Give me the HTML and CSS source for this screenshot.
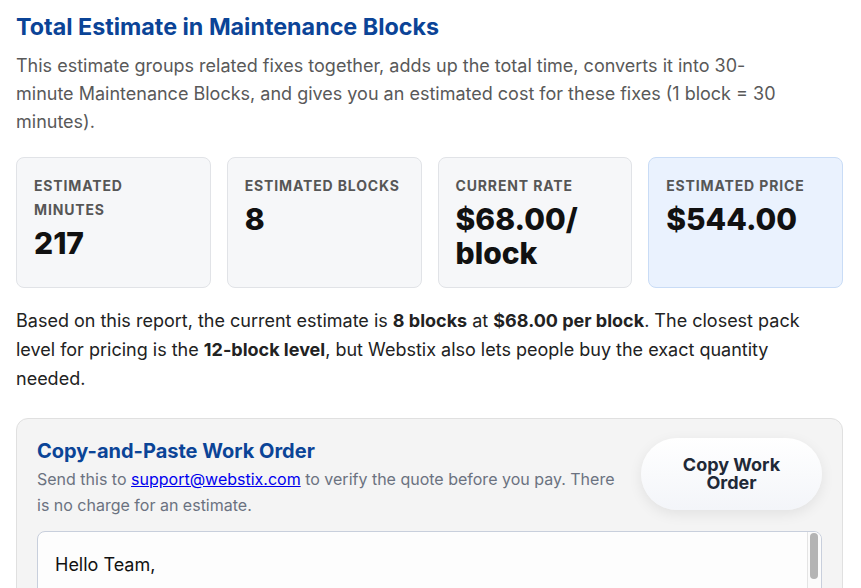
FILE: index.html
```html
<!DOCTYPE html>
<html>
<head>
<meta charset="utf-8">
<link rel="stylesheet" href="styles.css">
</head>
<body>
<section class="estimate">
  <h2 class="title">Total Estimate in Maintenance Blocks</h2>
  <p class="intro">This estimate groups related fixes together, adds up the total time, converts it into 30-minute Maintenance Blocks, and gives you an estimated cost for these fixes (1 block = 30 minutes).</p>
  <div class="cards">
    <div class="card"><div class="label">Estimated Minutes</div><div class="value">217</div></div>
    <div class="card"><div class="label">Estimated Blocks</div><div class="value">8</div></div>
    <div class="card"><div class="label">Current Rate</div><div class="value">$68.00/ block</div></div>
    <div class="card card-price"><div class="label">Estimated Price</div><div class="value">$544.00</div></div>
  </div>
  <p class="summary">Based on this report, the current estimate is <strong>8 blocks</strong> at <strong>$68.00 per block</strong>. The closest pack level for pricing is the <strong>12-block level</strong>, but Webstix also lets people buy the exact quantity needed.</p>
  <div class="order">
    <div class="order-head">
      <div class="order-text">
        <h3 class="order-title">Copy-and-Paste Work Order</h3>
        <p class="order-note">Send this to <a href="#">support@webstix.com</a> to verify the quote before you pay. There is no charge for an estimate.</p>
      </div>
      <button class="copy-btn">Copy Work<br>Order</button>
    </div>
    <div class="box-wrap">
      <textarea class="order-box" readonly>Hello Team,

I would like to request the following fixes from my website report.

Estimated minutes: 217
Estimated blocks: 8
Current rate: $68.00/block
Estimated price: $544.00

Please verify the quote before I pay.

Thank you.</textarea>
      <div class="scrollbar" aria-hidden="true"><div class="thumb"></div></div>
    </div>
  </div>
</section>
</body>
</html>
```

FILE: styles.css
```css
html, body {
  margin: 0;
  padding: 0;
  background: #ffffff;
}
body {
  font-family: Inter, "Noto Sans", sans-serif;
  color: #1f1f1f;
  padding: 0 18px 0 16px;
}
.title {
  margin: 0;
  padding-top: 13px;
  font-size: 23.3px;
  line-height: 28px;
  font-weight: 700;
  color: #0b4497;
}
.intro {
  margin: 11px 0 0;
  font-size: 18px;
  line-height: 28px;
  color: #595959;
  max-width: 770px;
}
.cards {
  display: grid;
  grid-template-columns: repeat(4, 1fr);
  gap: 16px;
  margin-top: 21px;
}
.card {
  background: #f6f7f9;
  border: 1px solid #e1e3e7;
  border-radius: 8px;
  padding: 16px 17px 16px;
  min-height: 97px;
}
.card-price {
  background: #eaf2fe;
  border-color: #c9dcf6;
}
.label {
  font-size: 14px;
  line-height: 24px;
  font-weight: 700;
  text-transform: uppercase;
  letter-spacing: 0.85px;
  color: #565656;
}
.value {
  font-size: 30px;
  line-height: 34px;
  font-weight: 800;
  color: #111111;
  margin-top: 4px;
}
.summary {
  margin: 18px 0 0;
  font-size: 18px;
  line-height: 29px;
  color: #222222;
  max-width: 800px;
}
.summary strong {
  font-weight: 700;
}
.order {
  margin-top: 25px;
  background: #f4f4f4;
  border: 1px solid #e0e0e0;
  border-radius: 12px;
  padding: 19px 20px 20px;
}
.order-head {
  display: flex;
  align-items: flex-start;
  justify-content: space-between;
  gap: 20px;
}
.order-text {
  flex: 1;
  max-width: 585px;
}
.order-title {
  margin: 0;
  font-size: 20px;
  line-height: 26px;
  font-weight: 700;
  color: #0b4497;
}
.order-note {
  margin: 2px 0 0;
  font-size: 16px;
  line-height: 26px;
  color: #6b7280;
}
.order-note a {
  color: #0000ee;
  text-decoration: underline;
}
.copy-btn {
  flex: 0 0 auto;
  width: 181px;
  height: 72px;
  margin-top: 0;
  border: none;
  border-radius: 36px;
  background: linear-gradient(180deg, #ffffff 0%, #f3f5f9 100%);
  box-shadow: 0 4px 14px rgba(0, 0, 0, 0.08);
  font-family: Inter, "Noto Sans", sans-serif;
  font-size: 18px;
  line-height: 18px;
  font-weight: 700;
  color: #1f2937;
  cursor: pointer;
}
.box-wrap {
  position: relative;
  margin-top: 13px;
}
.order-box {
  display: block;
  box-sizing: border-box;
  width: 100%;
  height: 220px;
  padding: 19px 30px 18px 17px;
  border: 1px solid #c8cfdc;
  border-radius: 8px;
  background: #fdfdfd;
  font-family: Inter, "Noto Sans", sans-serif;
  font-size: 18px;
  line-height: 28px;
  color: #111111;
  resize: none;
  overflow: hidden;
}
.scrollbar {
  position: absolute;
  top: 1px;
  right: 1px;
  bottom: 1px;
  width: 14px;
  background: #fbfbfb;
  border-left: 1px solid #e4e4e4;
  border-top-right-radius: 7px;
  box-sizing: border-box;
}
.thumb {
  margin: 1px 0 0 2px;
  width: 8px;
  height: 46px;
  border-radius: 4px;
  background: #b4b4b4;
}
```
